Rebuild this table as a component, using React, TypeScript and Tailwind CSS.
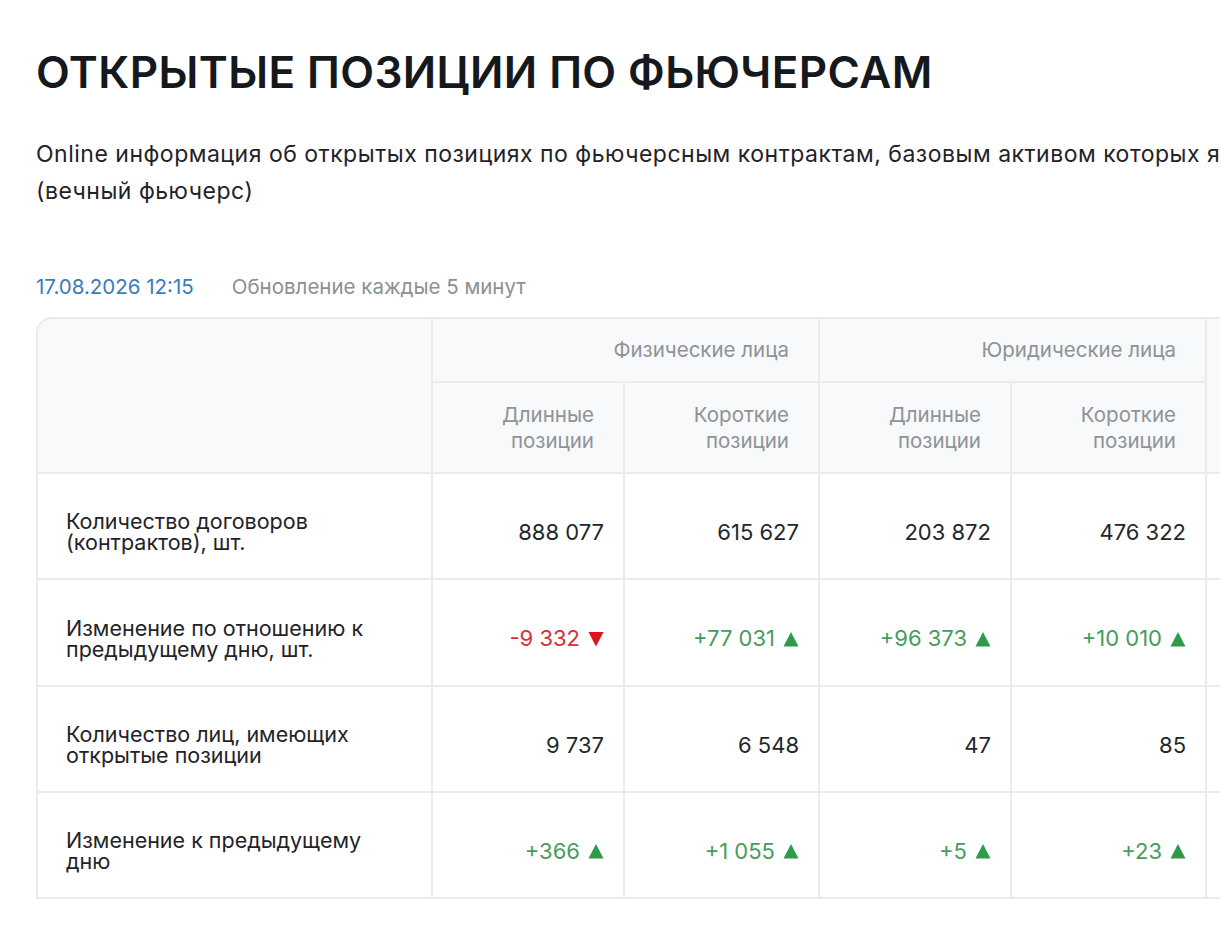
import React from 'react'

type Change = { value: string; up: boolean }

const rows: { label: [string, string]; cells: (string | Change)[] }[] = [
  {
    label: ['Количество договоров', '(контрактов), шт.'],
    cells: ['888 077', '615 627', '203 872', '476 322', ''],
  },
  {
    label: ['Изменение по отношению к', 'предыдущему дню, шт.'],
    cells: [
      { value: '-9 332', up: false },
      { value: '+77 031', up: true },
      { value: '+96 373', up: true },
      { value: '+10 010', up: true },
      '',
    ],
  },
  {
    label: ['Количество лиц, имеющих', 'открытые позиции'],
    cells: ['9 737', '6 548', '47', '85', ''],
  },
  {
    label: ['Изменение к предыдущему', 'дню'],
    cells: [
      { value: '+366', up: true },
      { value: '+1 055', up: true },
      { value: '+5', up: true },
      { value: '+23', up: true },
      '',
    ],
  },
]

const Triangle = ({ up }: { up: boolean }) => (
  <svg width="16" height="16" viewBox="0 0 16 16" className="shrink-0">
    {up ? (
      <polygon points="8,1 15.5,15.5 0.5,15.5" fill="#2f9a4a" />
    ) : (
      <polygon points="0.5,1 15.5,1 8,15.5" fill="#e3121c" />
    )}
  </svg>
)

const Cell = ({ cell }: { cell: string | Change }) => {
  if (typeof cell === 'string') {
    return (
      <div className="flex items-center justify-end bg-white pr-[19px] pt-[12px] text-[22px] text-[#23272b]">
        {cell}
      </div>
    )
  }
  return (
    <div
      className={`flex items-center justify-end gap-[8px] bg-white pr-[19px] pt-[12px] text-[22px] ${
        cell.up ? 'text-[#479b5c]' : 'text-[#d6303a]'
      }`}
    >
      <span>{cell.value}</span>
      <Triangle up={cell.up} />
    </div>
  )
}

export default function App() {
  return (
    <div
      className="h-[934px] w-[1220px] overflow-hidden bg-white pl-[36px] pt-[46px]"
      style={{ fontFamily: 'Inter, "Noto Sans", sans-serif' }}
    >
      <h1 className="text-[44px] font-semibold leading-[53px] tracking-[0.4px] text-[#15181d]">
        ОТКРЫТЫЕ ПОЗИЦИИ ПО ФЬЮЧЕРСАМ
      </h1>

      <div className="mt-[37px] text-[23px] leading-[37px] tracking-[0.5px] text-[#1f2328]">
        <div className="whitespace-nowrap">
          Online информация об открытых позициях по фьючерсным контрактам, базовым
          активом которых являются криптовалюты
        </div>
        <div>(вечный фьючерс)</div>
      </div>

      <div className="mt-[63px] flex items-center gap-[38px] text-[20.5px] leading-[28px]">
        <span className="text-[#3a7cba]">17.08.2026 12:15</span>
        <span className="text-[#8b9095]">Обновление каждые 5 минут</span>
      </div>

      <div className="mt-[16px] w-[1300px] overflow-hidden rounded-tl-[16px] border-2 border-[#e9ecef] bg-[#e9ecef]">
        <div className="grid grid-cols-[393px_190px_193px_190px_193px_200px] grid-rows-[62px_89px_104px_105px_104px_104px] gap-[2px]">
          <div className="row-span-2 bg-[#f7f9fa]" />
          <div className="col-span-2 flex items-center justify-end bg-[#f7f9fa] pr-[29px] text-[20.5px] text-[#8e9398]">
            Физические лица
          </div>
          <div className="col-span-2 flex items-center justify-end bg-[#f7f9fa] pr-[29px] text-[20.5px] text-[#8e9398]">
            Юридические лица
          </div>
          <div className="row-span-2 bg-[#f7f9fa]" />
          {['Длинные', 'Короткие', 'Длинные', 'Короткие'].map((w, i) => (
            <div
              key={i}
              className="flex items-center justify-end bg-[#f7f9fa] pr-[29px] text-right text-[20.5px] leading-[26px] text-[#8e9398]"
            >
              <p>
                {w}
                <br />
                позиции
              </p>
            </div>
          ))}

          {rows.map((row, r) => (
            <React.Fragment key={r}>
              <div className="flex items-center bg-white pl-[28px] pt-[12px] text-[21.5px] leading-[21px] text-[#1f2328]">
                <p>
                  {row.label[0]}
                  <br />
                  {row.label[1]}
                </p>
              </div>
              {row.cells.map((c, i) => (
                <Cell key={i} cell={c} />
              ))}
            </React.Fragment>
          ))}
        </div>
      </div>
    </div>
  )
}
